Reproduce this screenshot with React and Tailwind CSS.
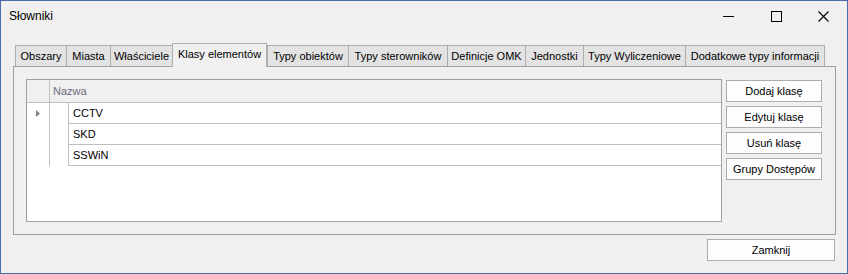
import React from 'react';

const tabs = [
  { label: 'Obszary', w: 51 },
  { label: 'Miasta', w: 44 },
  { label: 'Właściciele', w: 62 },
  { label: 'Klasy elementów', w: 95, active: true },
  { label: 'Typy obiektów', w: 81 },
  { label: 'Typy sterowników', w: 99 },
  { label: 'Definicje OMK', w: 78 },
  { label: 'Jednostki', w: 58 },
  { label: 'Typy Wyliczeniowe', w: 102 },
  { label: 'Dodatkowe typy informacji', w: 140 },
];

const rows = ['CCTV', 'SKD', 'SSWiN'];

const actions = ['Dodaj klasę', 'Edytuj klasę', 'Usuń klasę', 'Grupy Dostępów'];

const font = { fontFamily: '"Liberation Sans", "DejaVu Sans", sans-serif' };

const App = () => {
  return (
    <div
      className="w-[848px] h-[274px] border border-[#4a6ea9] bg-[#f0f0f0] flex flex-col text-[11px] text-black overflow-hidden"
      style={font}
    >
      {/* Title bar */}
      <div className="h-[29px] flex items-center shrink-0">
        <span className="pl-[8px] text-[12px] flex-1">Słowniki</span>
        <div className="flex h-full items-center">
          <div className="w-[48px] flex justify-center pt-[2px]">
            <svg width="11" height="11" viewBox="0 0 11 11">
              <path d="M0 5.5H11" stroke="#000" strokeWidth="1" />
            </svg>
          </div>
          <div className="w-[48px] flex justify-center pt-[2px]">
            <svg width="11" height="11" viewBox="0 0 11 11">
              <rect x="0.5" y="0.5" width="10" height="10" fill="none" stroke="#000" strokeWidth="1" />
            </svg>
          </div>
          <div className="w-[47px] flex justify-center pt-[2px]">
            <svg width="11" height="11" viewBox="0 0 11 11">
              <path d="M0.5 0.5L10.5 10.5M10.5 0.5L0.5 10.5" stroke="#000" strokeWidth="1.1" />
            </svg>
          </div>
        </div>
      </div>

      <div className="pl-[12px] pr-[11px] pt-[13px] flex flex-col">
        {/* Tabs */}
        <div className="h-[23px] flex items-end pl-[2px]">
          {tabs.map((t) =>
            t.active ? (
              <div
                key={t.label}
                className="relative z-10 -mb-px h-[24px] border border-b-0 border-[#adadad] bg-[#f0f0f0] flex items-center justify-center pb-[2px]"
                style={{ width: t.w }}
              >
                {t.label}
              </div>
            ) : (
              <div
                key={t.label}
                className="h-[21px] border border-b-0 border-r-0 last:border-r border-[#adadad] bg-[#e3e3e3] flex items-center justify-center pt-[1px]"
                style={{ width: t.w }}
              >
                {t.label}
              </div>
            )
          )}
        </div>

        {/* Panel */}
        <div className="h-[169px] border border-[#a0a0a0] flex pl-[12px] pt-[12px] pr-[13px] pb-[12px] gap-[4px]">
          {/* Grid */}
          <div className="w-[696px] border border-[#a0a0a0] bg-white flex flex-col">
            <div className="h-[23px] flex border-b border-[#bfbfbf] bg-[#f0f0f0] shrink-0">
              <div className="w-[23px] border-r border-[#bfbfbf]" />
              <div className="flex-1 flex items-center pl-[3px] text-[#6d6d80]">Nazwa</div>
            </div>
            {rows.map((r, i) => (
              <div key={r} className="h-[21px] flex shrink-0">
                <div className="w-[23px] border-r border-[#bfbfbf] flex items-center pl-[9px]">
                  {i === 0 && (
                    <svg width="4" height="7" viewBox="0 0 4 7">
                      <path d="M0 0L4 3.5L0 7Z" fill="#808080" />
                    </svg>
                  )}
                </div>
                <div className="w-[19px] border-r border-[#bfbfbf]" />
                <div className="flex-1 border-b border-[#bfbfbf] flex items-center pl-[4px]">{r}</div>
              </div>
            ))}
          </div>

          {/* Buttons */}
          <div className="flex flex-col gap-[4px] pt-[1px]">
            {actions.map((a) => (
              <div
                key={a}
                className="w-[96px] h-[22px] border border-[#adadad] bg-[#fdfdfd] flex items-center justify-center"
              >
                {a}
              </div>
            ))}
          </div>
        </div>

        {/* Footer */}
        <div className="flex justify-end pt-[4px] pr-[1px]">
          <div className="w-[128px] h-[22px] border border-[#adadad] bg-[#fdfdfd] flex items-center justify-center">
            Zamknij
          </div>
        </div>
      </div>
    </div>
  );
};

export default App;
